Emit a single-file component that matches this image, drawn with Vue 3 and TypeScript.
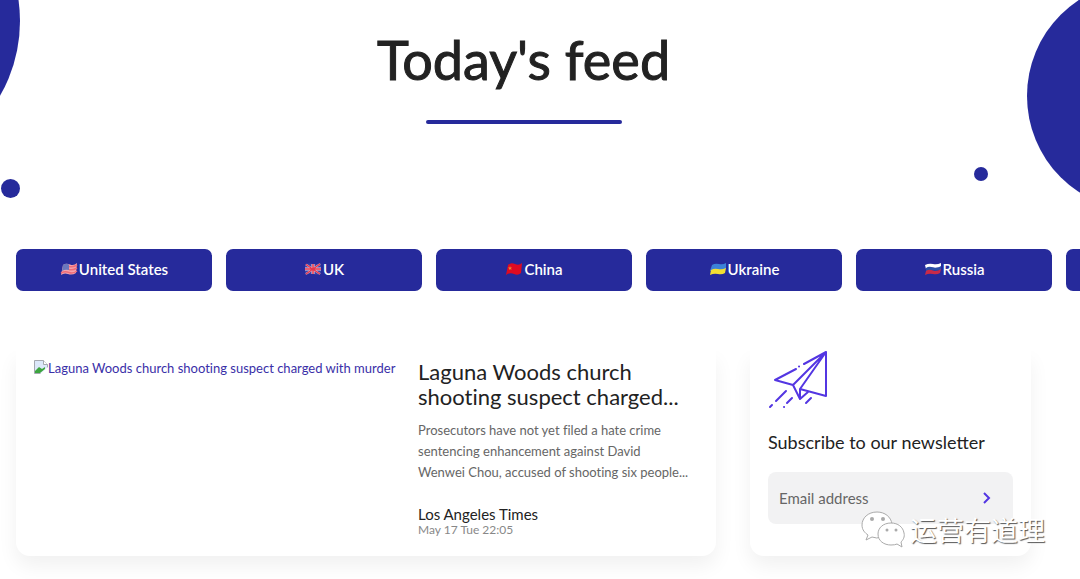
<script setup lang="ts">
import { ref } from 'vue'

interface Country {
  code: string
  name: string
}

const countries: Country[] = [
  { code: 'us', name: 'United States' },
  { code: 'uk', name: 'UK' },
  { code: 'cn', name: 'China' },
  { code: 'ua', name: 'Ukraine' },
  { code: 'ru', name: 'Russia' },
  { code: '', name: '' },
]

const email = ref('')
</script>

<template>
  <div class="page">
    <span class="circle circle-left" aria-hidden="true"></span>
    <span class="circle dot-left" aria-hidden="true"></span>
    <span class="circle circle-right" aria-hidden="true"></span>
    <span class="circle dot-right" aria-hidden="true"></span>

    <header class="hero">
      <h1 class="title">Today's feed</h1>
      <span class="rule"></span>
    </header>

    <nav class="countries">
      <button v-for="country in countries" :key="country.code" class="country" type="button">
        <svg v-if="country.code" class="flag" viewBox="0 0 18 14" aria-hidden="true">
          <g v-if="country.code === 'us'">
            <path d="M3 3Q6 1 10 2.500T17 1L16 11Q12 13.500 8 12T1 13Z" fill="#f6a3ad" />
            <path d="M9 4.500Q13 5.500 17 3M9 7.500Q13 8.500 17 6M1 11Q5 9 9 10.500T17 9" fill="none" stroke="#ef6c78" stroke-width="1.500" />
            <path d="M3 3Q6 1 9 2.500V8Q5 7 2 9Z" fill="#6b78bd" />
          </g>
          <g v-else-if="country.code === 'uk'">
            <path d="M1 2Q5 1 9 2T17 1V12Q13 13 9 12T1 13Z" fill="#3a42a8" />
            <path d="M2 2.500L16 12M16 2L2 12" stroke="#e8b9cb" stroke-width="2" />
            <path d="M9 2V12M1 7H17" stroke="#f3d5df" stroke-width="3" />
            <path d="M9 2V12M1 7H17M2 2.500L16 12M16 2L2 12" stroke="#e5384e" stroke-width="1.500" />
          </g>
          <g v-else-if="country.code === 'cn'">
            <path d="M3 3Q6 0 10 2T17 1L16 11Q13 14 9 12T1 13Z" fill="#df0b22" />
            <path d="M5 4L5.500 5.500 7 5.500 6 6.500 6.500 8 5 7 4 8 4 6.500 3 5.500H4.500Z" fill="#f0862e" />
          </g>
          <g v-else-if="country.code === 'ua'">
            <path d="M3 3Q6 1 10 2T17 1V7L1 9Z" fill="#3c82d8" />
            <path d="M2 8Q5 6 9 7T17 6L16 11Q13 13 9 12T1 13Z" fill="#f3df32" />
          </g>
          <g v-else>
            <path d="M1 3Q5 1 9 2T17 1V5Q13 6 9 5.500T2 7Z" fill="#fff" />
            <path d="M2 6Q5 4 9 5.500T17 4V8Q13 9 9 8.500T2 10Z" fill="#2a4fa8" />
            <path d="M2 9Q5 7 9 8.500T17 7L16 11Q13 13 9 12T1 13Z" fill="#c92a48" />
          </g>
        </svg>
        <span>{{ country.name }}</span>
      </button>
    </nav>

    <main class="feed">
      <article class="card story">
        <a class="thumb" href="#">
          <svg class="broken" viewBox="0 0 14 14" aria-hidden="true">
            <path d="M.5.500H9.500L13.500 4.500V13.500H.5Z" fill="#dce8fa" stroke="#a5a8b0" />
            <path d="M9.500.500V4.500H13.500" fill="#fff" stroke="#a5a8b0" />
            <path d="M1 13V11L5 7 8 9 11 7V9L6 13Z" fill="#3da53f" />
            <path d="M6 14L14 7V14Z" fill="#fff" />
          </svg>
          <span>Laguna Woods church shooting suspect charged with murder</span>
        </a>
        <div class="story-text">
          <h2 class="headline">Laguna Woods church shooting suspect charged...</h2>
          <p class="summary">Prosecutors have not yet filed a hate crime sentencing enhancement against David Wenwei&nbsp;Chou, accused of shooting six people...</p>
          <p class="source">Los Angeles Times</p>
          <time class="date">May 17 Tue 22:05</time>
        </div>
      </article>

      <aside class="card newsletter">
        <svg class="plane" viewBox="0 0 60 60" fill="none" stroke="#5336e2" stroke-width="2" stroke-linejoin="round" stroke-linecap="round" aria-hidden="true">
          <path d="M58 1V45L32 38 58 1 25 34 7 29 28 18M36 13L58 1M25 34L32 48 32 38M32 48L40 41" />
          <path d="M31 15.500H31.100M18 40L8 50M4 54L2 56M24 47L19 52M16 56H16.100M43 47L38 52" />
        </svg>
        <h2 class="subscribe">Subscribe to our newsletter</h2>
        <form class="email-form" @submit.prevent>
          <input v-model="email" class="email" type="email" placeholder="Email address" aria-label="Email address" />
          <button class="send" type="submit" aria-label="Subscribe">
            <svg viewBox="0 0 10 12" fill="none" stroke="#5336e2" stroke-width="2" aria-hidden="true">
              <path d="M2 1L7 6 2 11" />
            </svg>
          </button>
        </form>
      </aside>
    </main>

    <div class="watermark">
      <svg class="wechat" viewBox="0 0 44 38" aria-hidden="true">
        <g fill="#fff" stroke="#aaa" stroke-width="1">
          <path d="M16 1C7 1 1 7 1 14C1 19 4 22 7 24L5 29 11 26Q16 28 20 26C28 25 32 20 31 13C30 6 24 1 16 1Z" />
          <path d="M30 12C22 12 17 17 17 23C17 30 23 34 30 34Q34 34 36 33L41 36 40 31C42 29 44 26 43 22C42 16 37 12 30 12Z" />
        </g>
        <g fill="#aaa">
          <circle cx="11" cy="8" r="2" /><circle cx="22" cy="8" r="2" />
          <circle cx="26" cy="19" r="1.500" /><circle cx="35" cy="19" r="1.500" />
        </g>
      </svg>
      <span>运营有道理</span>
    </div>
  </div>
</template>

<style>
body {
  margin: 0;
  background: #fff;
}
</style>

<style scoped>
.page {
  position: relative;
  min-height: 100vh;
  box-sizing: border-box;
  overflow: hidden;
  padding: 30px 49px 22px 16px;
  font-family: Lato, "Liberation Sans", "Noto Sans CJK SC", sans-serif;
  font-variant-ligatures: none;
  color: #222;
}
h1, h2, p {
  margin: 0;
  font-weight: 400;
}
.circle {
  position: absolute;
  border-radius: 50%;
  background: #262a9b;
}
.circle-left {
  width: 300px;
  height: 300px;
  left: -280px;
  top: -129px;
}
.dot-left {
  width: 19px;
  height: 19px;
  left: 1px;
  top: 179px;
}
.circle-right {
  width: 230px;
  height: 230px;
  right: -177px;
  top: -19px;
}
.dot-right {
  width: 14px;
  height: 14px;
  right: 92px;
  top: 167px;
}
.hero {
  display: flex;
  flex-direction: column;
  align-items: center;
}
.title {
  font-size: 54px;
  line-height: 60px;
  -webkit-text-stroke: 1px #222;
}
.rule {
  width: 196px;
  height: 4px;
  margin-top: 30px;
  border-radius: 2px;
  background: #262a9b;
}
.countries {
  display: flex;
  gap: 14px;
  margin: 125px -49px 0 0;
  overflow: hidden;
}
.country {
  display: flex;
  flex: 0 0 196px;
  height: 42px;
  align-items: center;
  justify-content: center;
  gap: 1px;
  padding: 0 0 2px;
  border: 0;
  border-radius: 7px;
  background: #262a9b;
  color: #fff;
  font: 600 15px/20px Lato, "Liberation Sans", sans-serif;
}
.flag {
  width: 18px;
  height: 14px;
}
.feed {
  display: grid;
  grid-template-columns: minmax(0, 700fr) minmax(0, 281fr);
  gap: 34px;
  margin-top: 60px;
  clip-path: inset(0 -49px -60px -16px);
}
.card {
  border-radius: 0 0 14px 14px;
  box-shadow: 0 10px 20px rgba(0, 0, 0, 0.06);
}
.story {
  display: grid;
  grid-template-columns: minmax(0, 350fr) minmax(0, 280fr);
  gap: 34px;
  padding: 8px 18px 18px;
}
.thumb {
  display: flex;
  align-items: flex-start;
  padding-top: 1px;
  color: #3a2fa8;
  font-size: 13px;
  line-height: 16px;
  text-decoration: none;
  white-space: nowrap;
}
.broken {
  flex: none;
  width: 14px;
  height: 14px;
}
.headline {
  font-size: 22px;
  line-height: 25px;
}
.summary {
  margin-top: 11px;
  color: #666;
  font-size: 13px;
  line-height: 21px;
}
.source {
  margin-top: 23px;
  font-size: 15px;
  line-height: 16px;
}
.date {
  display: block;
  color: #888;
  font-size: 12px;
  line-height: 16px;
}
.newsletter {
  padding: 0 18px 32px;
}
.plane {
  display: block;
  width: 60px;
  height: 60px;
}
.subscribe {
  margin-top: 20px;
  font-size: 18px;
  line-height: 22px;
  font-variant-ligatures: normal;
}
.email-form {
  display: flex;
  margin-top: 19px;
  height: 52px;
  border-radius: 8px;
  background: #f2f2f3;
}
.email {
  flex: 1;
  min-width: 0;
  padding: 0 0 0 11px;
  border: 0;
  background: none;
  color: #666;
  font: 15px/20px Lato, "Liberation Sans", sans-serif;
}
.email::placeholder {
  color: #666;
  opacity: 1;
}
.send {
  display: flex;
  align-items: center;
  justify-content: center;
  width: 52px;
  padding: 0;
  border: 0;
  background: none;
}
.send svg {
  width: 10px;
  height: 12px;
}
.watermark {
  position: absolute;
  right: 35px;
  top: 510px;
  display: flex;
  align-items: center;
  gap: 5px;
  color: #fff;
  font: 27px/40px "Noto Sans CJK SC", sans-serif;
  text-shadow: 1px 1px 1px #555;
}
.wechat {
  width: 44px;
  height: 38px;
}
</style>
